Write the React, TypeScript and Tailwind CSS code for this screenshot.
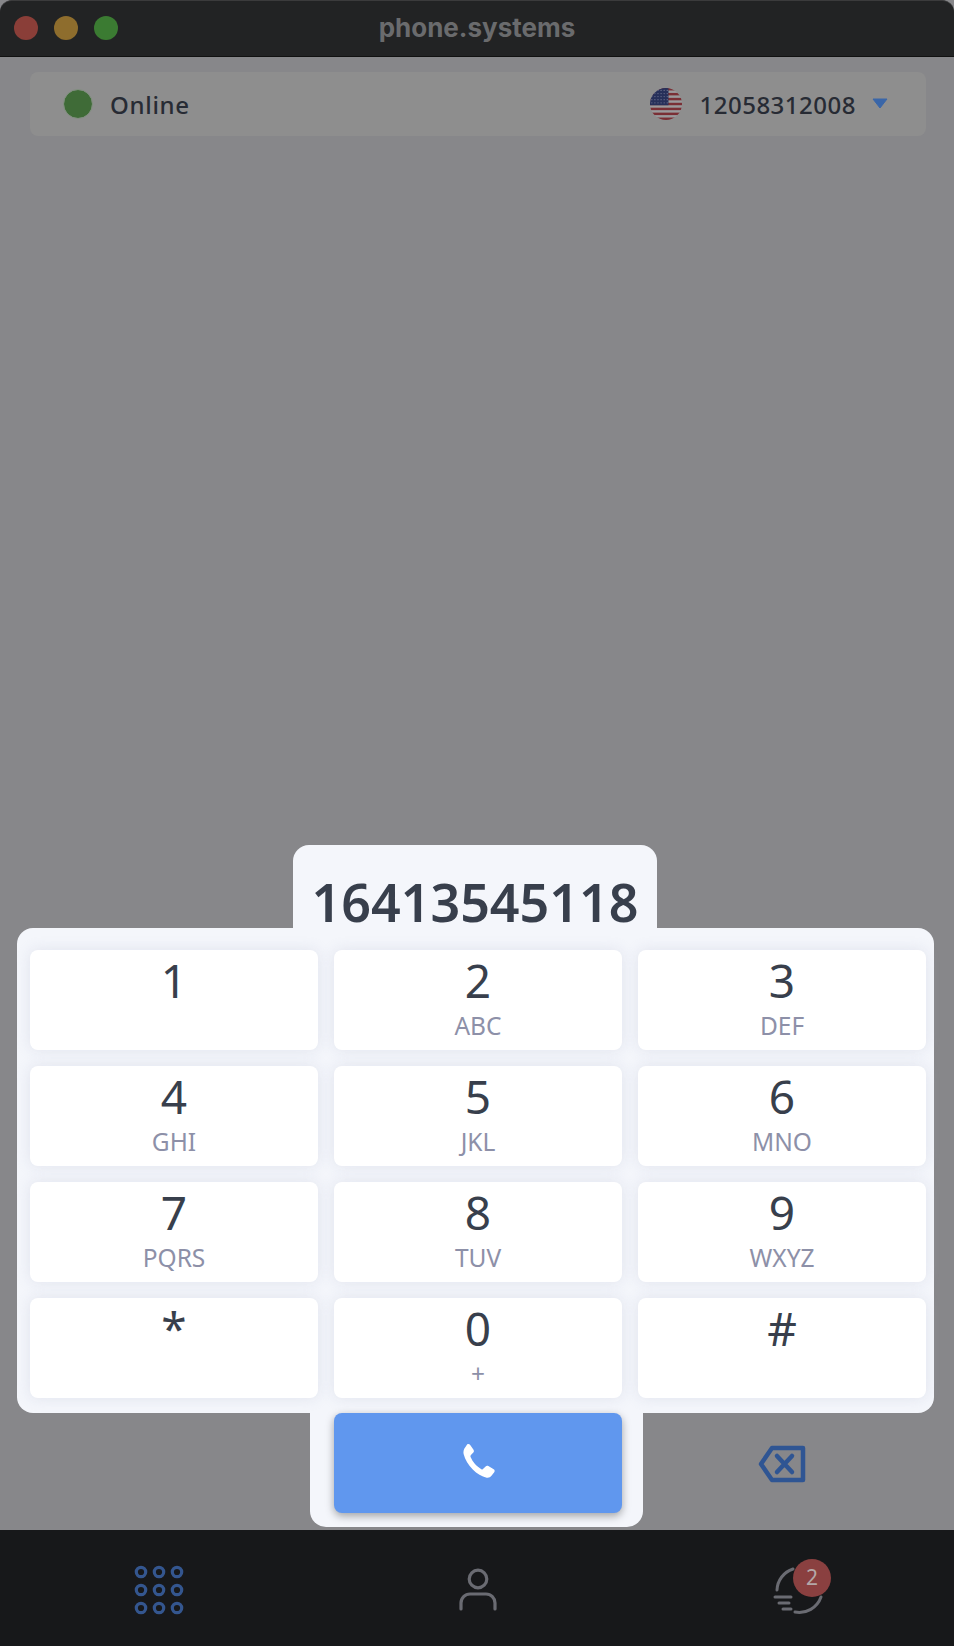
const keys: [string, string][] = [
  ["1", ""], ["2", "ABC"], ["3", "DEF"],
  ["4", "GHI"], ["5", "JKL"], ["6", "MNO"],
  ["7", "PQRS"], ["8", "TUV"], ["9", "WXYZ"],
  ["*", ""], ["0", "+"], ["#", ""],
];

function Flag() {
  const stripes = [0, 2, 4, 6, 8, 10, 12];
  return (
    <svg width="32" height="32" viewBox="0 0 26 26">
      <defs>
        <clipPath id="c"><circle cx="13" cy="13" r="13" /></clipPath>
      </defs>
      <g clipPath="url(#c)">
        <rect width="26" height="26" fill="#9a9a9c" />
        {stripes.map((i) => (
          <rect key={i} y={i * 2} width="26" height="2" fill="#7a2f35" />
        ))}
        <rect width="15" height="14" fill="#27305a" />
        {[2, 4.500, 7, 9.500, 12].map((y) =>
          [1.500, 4, 6.500, 9, 11.500, 14].map((x) => <circle key={`${x}-${y}`} cx={x} cy={y} r="0.5" fill="#6f7390" />)
        )}
      </g>
    </svg>
  );
}

export default function App() {
  return (
    <div className="w-[954px] h-[1646px] flex flex-col bg-[#87878a] overflow-hidden font-['Noto_Sans',sans-serif]">
      <div className="h-[57px] shrink-0 bg-[#222324] border-b border-[#111] border-t-[#3b3b3c] border-t rounded-t-xl flex items-center justify-center relative">
        <div className="absolute left-[14px] top-[15px] flex gap-[16px]">
          <span className="w-6 h-6 rounded-full bg-[#8a3e38]" />
          <span className="w-6 h-6 rounded-full bg-[#8e6d2d]" />
          <span className="w-6 h-6 rounded-full bg-[#3b7b32]" />
        </div>
        <span className="font-['Inter',sans-serif] font-bold text-[26px] -mt-[2px] text-[#6a6b6d]">phone.systems</span>
      </div>

      <div className="flex-1 flex flex-col">
        <div className="mt-[15px] ml-[30px] mr-[28px] h-[64px] rounded-lg bg-[#8e8e8e] flex items-center pl-[34px] pr-[38px] justify-between">
          <div className="flex items-center gap-[18px]">
            <span className="w-[28px] h-[28px] rounded-full bg-[#3f6b37] outline outline-1 outline-[#7f8f7d]" />
            <span className="text-[24px] font-medium tracking-[0.7px] mt-[2px] text-[#272b34]">Online</span>
          </div>
          <div className="flex items-center">
            <Flag />
            <span className="ml-[17px] text-[24px] font-medium tracking-[0.5px] mt-[2px] text-[#272b34]">12058312008</span>
            <svg className="ml-[16px] -mt-[2px]" width="16" height="11" viewBox="0 0 16 11">
              <path d="M1 1h14L8 10z" fill="#3a66a8" stroke="#3a66a8" strokeLinejoin="round" />
            </svg>
          </div>
        </div>

        <div className="flex-1" />

        <div className="self-start ml-[293px] w-[364px] h-[83px] bg-[#f4f6fb] rounded-t-2xl flex items-center justify-center">
          <span className="text-[52px] font-semibold leading-none text-[#383f4c] mt-[30px]">16413545118</span>
        </div>

        <div className="ml-[17px] w-[917px] h-[485px] bg-[#f4f6fb] rounded-2xl pl-[13px] pr-[8px] pt-[22px] grid grid-cols-[288px_288px_288px] gap-x-[16px] gap-y-[16px] content-start">
          {keys.map(([d, l]) => (
            <div key={d} className="h-[100px] rounded-lg bg-white shadow-[0_0_14px_rgba(200,205,222,0.45)] flex flex-col items-center text-center">
              <span className="text-[46px] leading-[60px] text-[#383f4c]">{d}</span>
              <span className="text-[24.5px] leading-[28px] mt-[2px] text-[#8d90a8]">{l}</span>
            </div>
          ))}
        </div>

        <div className="h-[117px] pl-[30px] grid grid-cols-[288px_288px_288px] gap-x-[16px]">
          <div />
          <div className="-ml-[24px] -mr-[21px] pl-[24px] pr-[21px] h-[114px] bg-[#f4f6fb] rounded-b-2xl">
            <div className="h-[100px] rounded-lg bg-[#6097ee] shadow-[0_3px_8px_rgba(0,0,0,0.35)] flex items-center justify-center">
              <svg width="44" height="44" viewBox="0 0 24 24" fill="#fff" className="-ml-[2px]">
                <path d="M6.600 1.900c.5-.4 1.200-.3 1.600.2l1.900 2.700c.3.500.3 1.100-.1 1.500L8.700 7.700c-.3.300-.3.700-.2 1 .6 1.400 1.400 2.700 2.400 3.900 1 1.100 2.200 2.100 3.500 2.800.4.200.8.100 1-.2l1.300-1.300c.4-.4 1-.5 1.500-.2l2.900 1.700c.6.300.7 1.100.3 1.600l-1.500 2c-.6.800-1.600 1.200-2.600 1-2.700-.5-5.300-2-7.600-4.400C7.300 13.200 5.500 10.200 4.700 7.100c-.3-1.300.1-2.700 1-3.800z" />
              </svg>
            </div>
          </div>
          <div className="flex items-start justify-center pt-[32px]">
            <svg width="50" height="38" viewBox="0 0 50 38" fill="none" stroke="#2f5593" strokeWidth="4.500" strokeLinejoin="round" strokeLinecap="round">
              <path d="M15 3h31v32H15L4 19z" />
              <path d="M20 11l15 16M35 11L20 27" />
            </svg>
          </div>
        </div>
      </div>

      <div className="h-[116px] shrink-0 bg-[#17181a] grid grid-cols-3 items-center pt-[4px]">
        <div className="flex justify-center">
          <svg width="50" height="50" viewBox="0 0 50 50" fill="none" stroke="#34568f" strokeWidth="3.200">
            {[7, 25, 43].map((y) => [7, 25, 43].map((x) => <circle key={`${x}${y}`} cx={x} cy={y} r="4.700" />))}
          </svg>
        </div>
        <div className="flex justify-center pl-[2px]">
          <svg width="38" height="44" viewBox="0 0 38 44" fill="none" stroke="#6a6b72" strokeWidth="3.200" strokeLinecap="round">
            <circle cx="19" cy="11" r="8.800" />
            <path d="M2 41v-6a9 9 0 0 1 9-9h16a9 9 0 0 1 9 9v6" />
          </svg>
        </div>
        <div className="flex justify-center pl-[12px]">
          <div className="relative w-[60px] h-[60px]">
            <svg width="60" height="60" viewBox="0 0 60 60" fill="none" stroke="#6a6b72" strokeWidth="3" strokeLinecap="round">
              <path d="M22 9A23 23 0 0 0 6 30" />
              <path d="M50 37A23 23 0 0 1 24 52" />
              <path d="M4 37h16M8 43h10M12 49h8" />
            </svg>
            <span className="absolute left-[22px] -top-[1px] w-[38px] h-[38px] rounded-full bg-[#8a4040] text-[#b4a8a8] text-[21px] flex items-center justify-center">2</span>
          </div>
        </div>
      </div>
    </div>
  );
}
